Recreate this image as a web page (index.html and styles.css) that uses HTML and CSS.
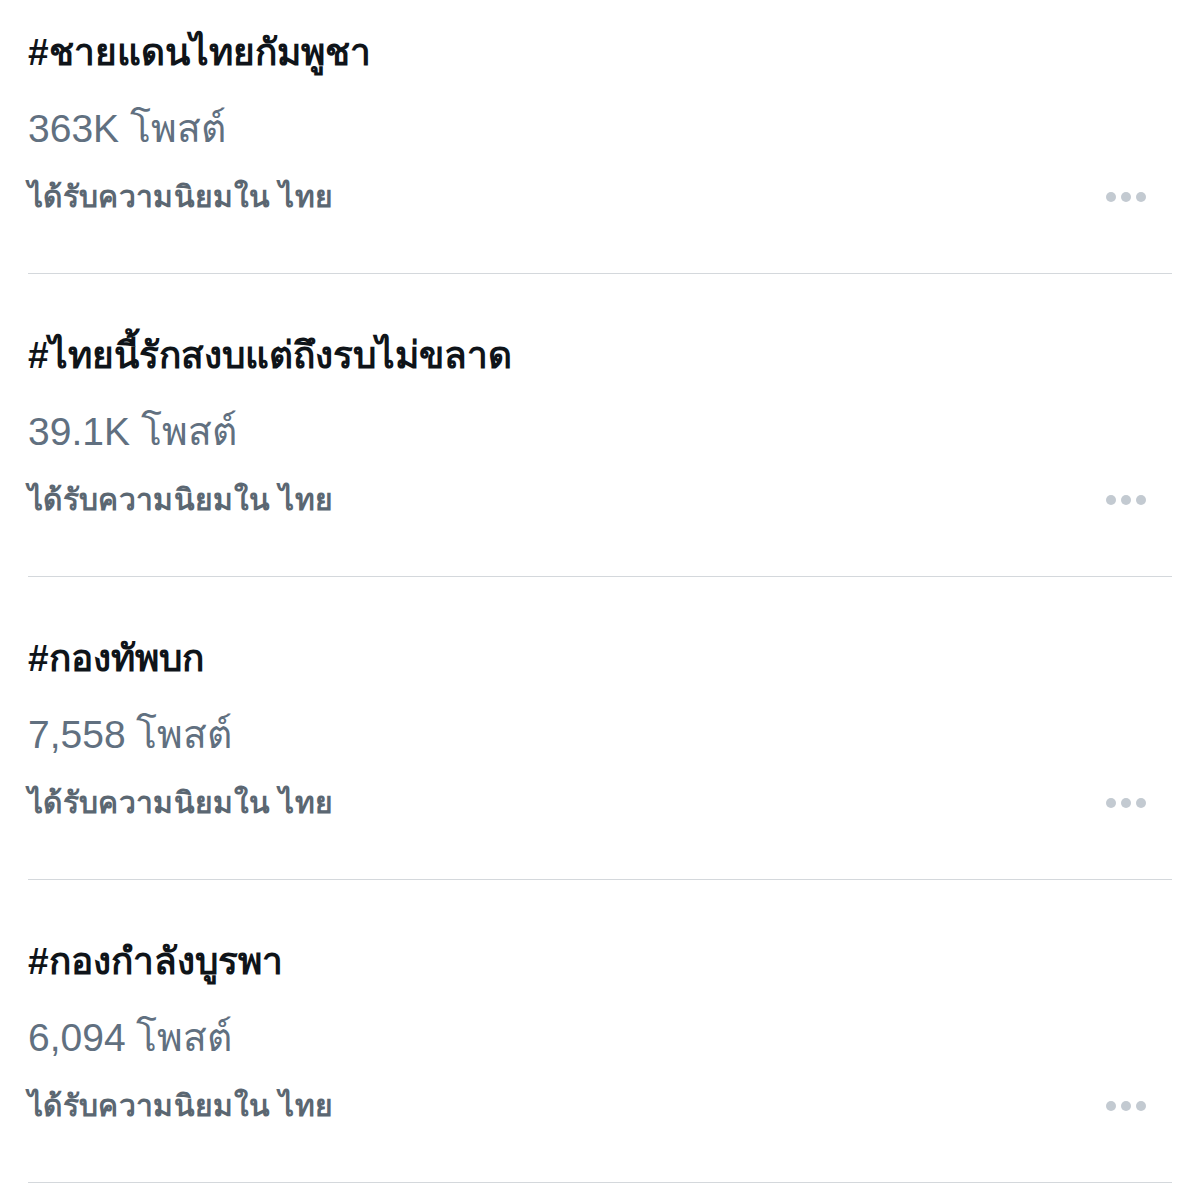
FILE: index.html
```html
<!DOCTYPE html>
<html lang="th">
<head>
<meta charset="utf-8">
<title>Trends</title>
<link rel="stylesheet" href="styles.css">
</head>
<body>
<div class="list">
  <div class="item">
    <div class="title">#ชายแดนไทยกัมพูชา</div>
    <div class="count">363K โพสต์</div>
    <div class="meta"><span class="where">ได้รับความนิยมใน ไทย</span><span class="dots"><i></i><i></i><i></i></span></div>
  </div>
  <div class="item">
    <div class="title">#ไทยนี้รักสงบแต่ถึงรบไม่ขลาด</div>
    <div class="count">39.1K โพสต์</div>
    <div class="meta"><span class="where">ได้รับความนิยมใน ไทย</span><span class="dots"><i></i><i></i><i></i></span></div>
  </div>
  <div class="item">
    <div class="title">#กองทัพบก</div>
    <div class="count">7,558 โพสต์</div>
    <div class="meta"><span class="where">ได้รับความนิยมใน ไทย</span><span class="dots"><i></i><i></i><i></i></span></div>
  </div>
  <div class="item">
    <div class="title">#กองกำลังบูรพา</div>
    <div class="count">6,094 โพสต์</div>
    <div class="meta"><span class="where">ได้รับความนิยมใน ไทย</span><span class="dots"><i></i><i></i><i></i></span></div>
  </div>
</div>
</body>
</html>
```

FILE: styles.css
```css
html, body {
  margin: 0;
  padding: 0;
  background: #ffffff;
}
body {
  font-family: "Liberation Sans", "Noto Sans", "DejaVu Sans", sans-serif;
  overflow: hidden;
}
.list {
  margin: -29px 28px 0 28px;
}
.item {
  border-bottom: 1px solid #d4d8dc;
  padding: 52px 0 56px 0;
}
.title {
  font-size: 37px;
  font-weight: 700;
  color: #0f1419;
  line-height: 60px;
  height: 60px;
}
.count {
  margin-top: 16px;
  font-size: 39px;
  color: #617080;
  line-height: 60px;
  height: 60px;
}
.meta {
  margin-top: 18px;
  height: 40px;
  display: flex;
  align-items: center;
  justify-content: space-between;
}
.where {
  font-size: 30px;
  font-weight: 700;
  color: #5b6772;
  line-height: 40px;
  letter-spacing: 0.35px;
}
.dots {
  display: flex;
  gap: 5px;
  margin-right: 26px;
}
.dots i {
  display: block;
  width: 10px;
  height: 10px;
  border-radius: 50%;
  background: #c3cad1;
}
```
